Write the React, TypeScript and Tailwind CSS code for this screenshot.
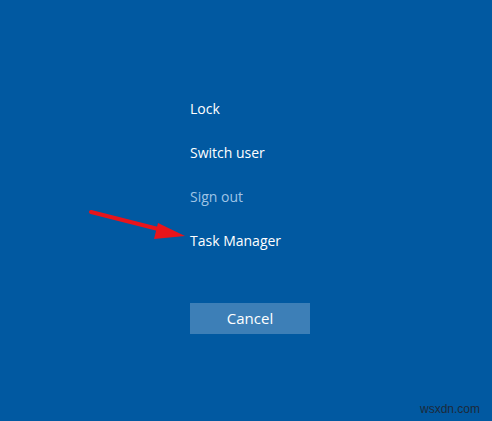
export default function App() {
    const items = [
        { label: "Lock", dim: false },
        { label: "Switch user", dim: false },
        { label: "Sign out", dim: true },
        { label: "Task Manager", dim: false },
    ];

    return (
        <div className="relative flex h-[421px] w-[492px] flex-col overflow-hidden bg-[#0159a1] font-['Segoe_UI','Open_Sans',sans-serif]">
            <div className="flex flex-col pl-[190px] pt-[98px]">
                {items.map((item) => (
                    <div key={item.label} className={`h-[44px] text-[14px] leading-[22px] ${item.dim ? "text-[#9fc4e6]" : "text-white"}`}>
                        {item.label}
                    </div>
                ))}
                <button className="mt-[29px] h-[31px] w-[120px] bg-[#3d7fb7] text-[15px] text-white">Cancel</button>
            </div>

            {/* red annotation arrow */}
            <svg className="absolute left-0 top-0" width="492" height="421">
                <line x1="91" y1="212" x2="166" y2="231" stroke="#e8141b" strokeWidth="4" strokeLinecap="round" />
                <polygon points="185,236 158,223 154,239" fill="#e8141b" />
            </svg>

            <div className="absolute bottom-[3px] right-[12px] text-[12px] text-[#1d2a3a] font-['Liberation_Sans',sans-serif]">wsxdn.com</div>
        </div>
    );
}
